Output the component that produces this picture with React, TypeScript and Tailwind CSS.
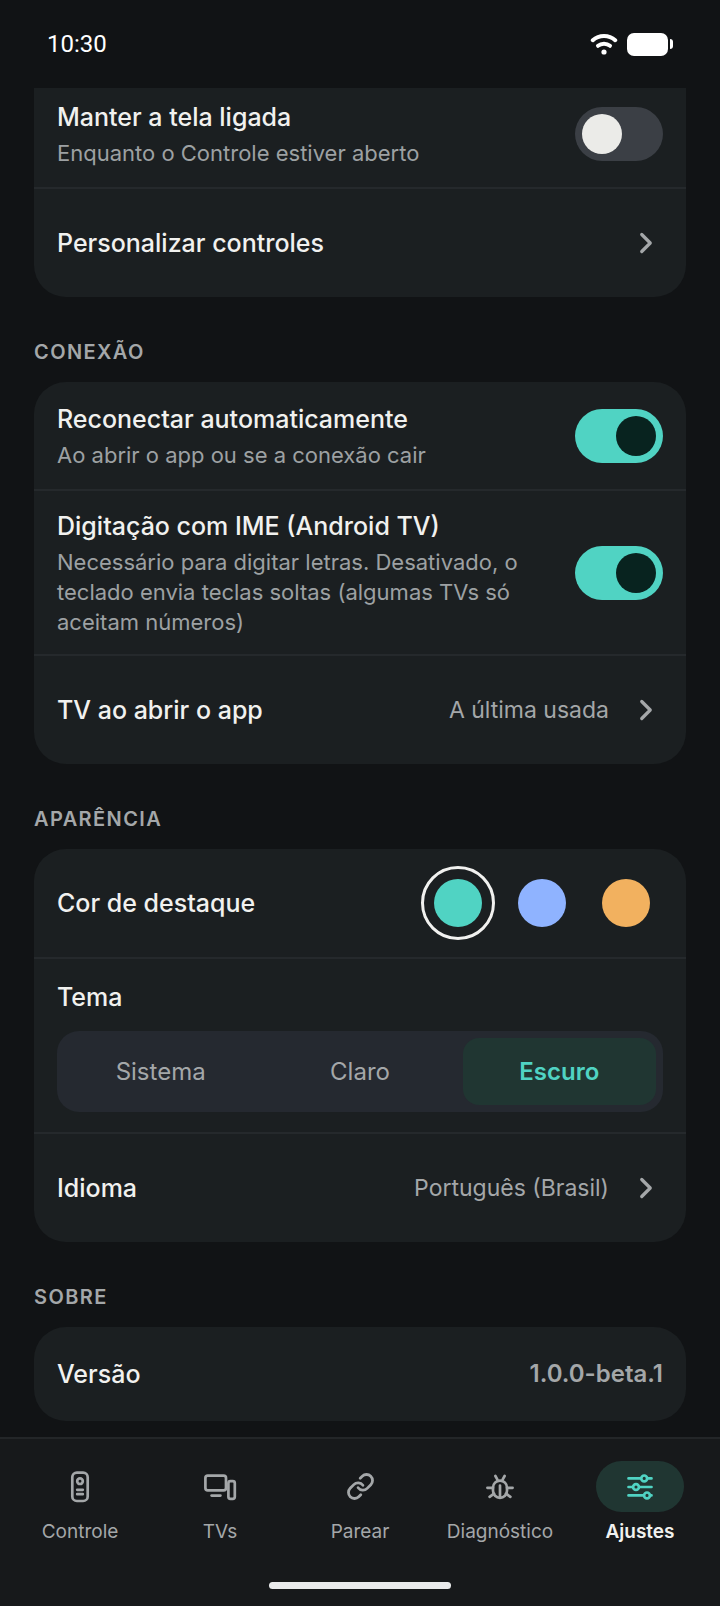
import { useState, type ReactNode } from "react";
import { ChevronRight, Link } from "lucide-react";

const ACCENTS = [
    { id: "teal", label: "Turquesa", dot: "before:bg-[#50d3c3]" },
    { id: "blue", label: "Azul", dot: "before:bg-[#8fb3ff]" },
    { id: "amber", label: "Âmbar", dot: "before:bg-[#f2b15f]" },
];

const THEMES = ["Sistema", "Claro", "Escuro"];

function RemoteIcon() {
    return (
        <svg viewBox="0 0 34 34" className="w-[34px] h-[34px]" fill="none" stroke="currentColor" strokeWidth="2.7" strokeLinecap="round" aria-hidden="true">
            <rect x="9.3" y="2.6" width="15.4" height="28.4" rx="4.6" />
            <circle cx="17" cy="11.2" r="2.8" />
            <path d="M14.2 19.8h5.6M14.2 24.2h5.6" />
        </svg>
    );
}

function DevicesIcon() {
    return (
        <svg viewBox="0 0 34 34" className="w-[34px] h-[34px]" fill="none" stroke="currentColor" strokeWidth="2.7" strokeLinecap="round" aria-hidden="true">
            <rect x="2.4" y="5.6" width="20.6" height="14.8" rx="2.4" />
            <path d="M8.6 25.6h8.8" />
            <rect x="25.4" y="11.2" width="6.4" height="17.6" rx="2" />
        </svg>
    );
}

function BugIcon() {
    return (
        <svg viewBox="0 0 34 34" className="w-[34px] h-[34px]" fill="none" stroke="currentColor" strokeWidth="2.7" strokeLinecap="round" aria-hidden="true">
            <rect x="10" y="10.6" width="14" height="17.2" rx="7" />
            <path d="M17 15.5v12M14.4 9.6l-2-3.6M19.6 9.6l2-3.6M10 17.8H4.4M24 17.8h5.6M11 23.6l-4.4 3.2M23 23.6l4.4 3.2" />
        </svg>
    );
}

function SlidersIcon() {
    return (
        <svg viewBox="0 0 34 34" className="w-[34px] h-[34px]" fill="none" stroke="currentColor" strokeWidth="2.7" strokeLinecap="round" aria-hidden="true">
            <path d="M5.5 8.4h23M5.5 17h23M5.5 25.4h23" />
            <g className="fill-[#203632]">
                <circle cx="21.2" cy="8.4" r="2.9" />
                <circle cx="13" cy="17" r="2.9" />
                <circle cx="24" cy="25.4" r="2.9" />
            </g>
        </svg>
    );
}

const NAV_ITEMS = [
    { label: "Controle", icon: <RemoteIcon /> },
    { label: "TVs", icon: <DevicesIcon /> },
    { label: "Parear", icon: <Link className="w-[29px] h-[29px]" strokeWidth={2.3} /> },
    { label: "Diagnóstico", icon: <BugIcon /> },
    { label: "Ajustes", icon: <SlidersIcon />, active: true },
];

function StatusBar() {
    return (
        <header className="h-[88px] shrink-0 px-[47px] flex items-center justify-between text-white">
            <span className="font-[Roboto,sans-serif] text-[24px] leading-8">10:30</span>
            <div className="flex items-center gap-[9px]">
                <svg viewBox="0 0 28 24" className="w-7 h-6" fill="none" stroke="currentColor" strokeWidth="4" strokeLinecap="round" aria-hidden="true">
                    <path d="M2.8 8.2C9 2.6 19 2.6 25.2 8.2" />
                    <path d="M8 13.8c3.4-2.8 8.6-2.8 12 0" />
                    <circle cx="14" cy="20" r="2.6" fill="currentColor" stroke="none" />
                </svg>
                <div className="flex items-center gap-0.5">
                    <div className="w-[41px] h-[23px] rounded-[7px] bg-white" />
                    <div className="w-[3px] h-[10px] rounded-r-[3px] bg-white" />
                </div>
            </div>
        </header>
    );
}

function Card({ children, className = "rounded-[32px]" }: { children: ReactNode; className?: string }) {
    return (
        <div className={`bg-[#1b1f21] divide-y-2 divide-[#25292c] overflow-hidden ${className}`}>
            {children}
        </div>
    );
}

function SectionTitle({ children }: { children: ReactNode }) {
    return (
        <h2 className="pt-[42px] pb-[17px] text-[20px] leading-[26px] font-semibold tracking-[0.07em] uppercase text-[#a4a7a9]">
            {children}
        </h2>
    );
}

interface SwitchRowProps {
    title: string;
    description: string;
    defaultChecked?: boolean;
    className?: string;
}

function SwitchRow({ title, description, defaultChecked = false, className = "pt-[18px] pb-[17px] min-h-[109px]" }: SwitchRowProps) {
    const [checked, setChecked] = useState(defaultChecked);

    return (
        <label className={`px-[23px] flex items-center justify-between gap-8 cursor-pointer ${className}`}>
            <span className="flex-1 flex flex-col gap-[3px]">
                <span className="text-[25px] leading-[35px] font-medium text-[#f1f1ef]">{title}</span>
                <span className="text-[22px] leading-[30px] text-[#9da1a3]">{description}</span>
            </span>
            <input
                type="checkbox"
                role="switch"
                checked={checked}
                onChange={(e) => setChecked(e.target.checked)}
                className="appearance-none shrink-0 w-[88px] h-[54px] p-[7px] rounded-full bg-[#3b3f45] checked:bg-[#50d3c3] flex justify-start checked:justify-end cursor-pointer before:content-[''] before:w-10 before:h-10 before:rounded-full before:bg-[#ebebe8] checked:before:bg-[#08231f]"
            />
        </label>
    );
}

function LinkRow({ title, value }: { title: string; value?: string }) {
    return (
        <button type="button" className="w-full h-[108px] px-[23px] flex items-center gap-5 text-left cursor-pointer">
            <span className="flex-1 text-[25px] leading-[35px] font-medium text-[#f1f1ef]">{title}</span>
            {value && <span className="text-[23px] leading-[30px] text-[#a4a7a9]">{value}</span>}
            <ChevronRight className="w-[34px] h-[34px] text-[#a4a7a9]" strokeWidth={2.3} />
        </button>
    );
}

export default function App() {
    const [accent, setAccent] = useState("teal");
    const [theme, setTheme] = useState("Escuro");

    return (
        <div className="min-h-screen flex flex-col bg-[#111315] font-[Inter,sans-serif]">
            <StatusBar />

            <main className="flex-1 px-[34px] pb-4">
                <Card className="rounded-b-[32px]">
                    <SwitchRow
                        title="Manter a tela ligada"
                        description="Enquanto o Controle estiver aberto"
                        className="pt-3 pb-[19px]"
                    />
                    <LinkRow title="Personalizar controles" />
                </Card>

                {/* Conexão */}
                <SectionTitle>Conexão</SectionTitle>
                <Card>
                    <SwitchRow
                        title="Reconectar automaticamente"
                        description="Ao abrir o app ou se a conexão cair"
                        defaultChecked
                    />
                    <SwitchRow
                        title="Digitação com IME (Android TV)"
                        description="Necessário para digitar letras. Desativado, o teclado envia teclas soltas (algumas TVs só aceitam números)"
                        defaultChecked
                    />
                    <LinkRow title="TV ao abrir o app" value="A última usada" />
                </Card>

                {/* Aparência */}
                <SectionTitle>Aparência</SectionTitle>
                <Card>
                    <div role="radiogroup" aria-labelledby="accent-title" className="h-[110px] px-[23px] flex items-center justify-between">
                        <span id="accent-title" className="text-[25px] leading-[35px] font-medium text-[#f1f1ef]">Cor de destaque</span>
                        <div className="flex gap-2.5">
                            {ACCENTS.map((item) => (
                                <input
                                    key={item.id}
                                    type="radio"
                                    name="accent"
                                    aria-label={item.label}
                                    checked={accent === item.id}
                                    onChange={() => setAccent(item.id)}
                                    className={`appearance-none w-[74px] h-[74px] rounded-full border-[3px] border-transparent checked:border-[#f1f1ef] flex items-center justify-center cursor-pointer before:content-[''] before:w-12 before:h-12 before:rounded-full ${item.dot}`}
                                />
                            ))}
                        </div>
                    </div>
                    <div role="radiogroup" aria-labelledby="theme-title" className="px-[23px] pt-[21px] pb-5">
                        <span id="theme-title" className="block text-[25px] leading-[35px] font-medium text-[#f1f1ef]">Tema</span>
                        <div className="mt-4 p-[7px] grid grid-cols-3 gap-1.5 rounded-[22px] bg-[#252930]">
                            {THEMES.map((name) => (
                                <label
                                    key={name}
                                    className="relative h-[67px] flex items-center justify-center rounded-2xl text-[24px] leading-[30px] text-[#a4a7a9] has-checked:bg-[#203632] has-checked:text-[#50d3c3] has-checked:font-semibold cursor-pointer"
                                >
                                    <input
                                        type="radio"
                                        name="theme"
                                        checked={theme === name}
                                        onChange={() => setTheme(name)}
                                        className="sr-only"
                                    />
                                    {name}
                                </label>
                            ))}
                        </div>
                    </div>
                    <LinkRow title="Idioma" value="Português (Brasil)" />
                </Card>

                {/* Sobre */}
                <SectionTitle>Sobre</SectionTitle>
                <Card>
                    <div className="h-[94px] px-[23px] flex items-center justify-between">
                        <span className="text-[25px] leading-[35px] font-medium text-[#f1f1ef]">Versão</span>
                        <span className="text-[24px] leading-[30px] font-semibold text-[#a4a7a9]">1.0.0-beta.1</span>
                    </div>
                </Card>
            </main>

            <nav className="shrink-0 px-2.5 pt-[22px] pb-[17px] border-t-2 border-[#232628] bg-[#17191b]">
                <div className="grid grid-cols-5">
                    {NAV_ITEMS.map((item) => (
                        <button
                            key={item.label}
                            type="button"
                            aria-current={item.active ? "page" : undefined}
                            className={`flex flex-col items-center gap-2 cursor-pointer ${item.active ? "text-[#50d3c3]" : "text-[#a4a7a9]"}`}
                        >
                            <span className={`w-[88px] h-[51px] rounded-full flex items-center justify-center ${item.active ? "bg-[#203632]" : ""}`}>
                                {item.icon}
                            </span>
                            <span className={`text-[19px] leading-6 ${item.active ? "font-semibold text-[#f1f1ef]" : ""}`}>
                                {item.label}
                            </span>
                        </button>
                    ))}
                </div>
                <div className="mt-[38px] mx-auto w-[182px] h-[7px] rounded-full bg-[#eaebec]" />
            </nav>
        </div>
    );
}
